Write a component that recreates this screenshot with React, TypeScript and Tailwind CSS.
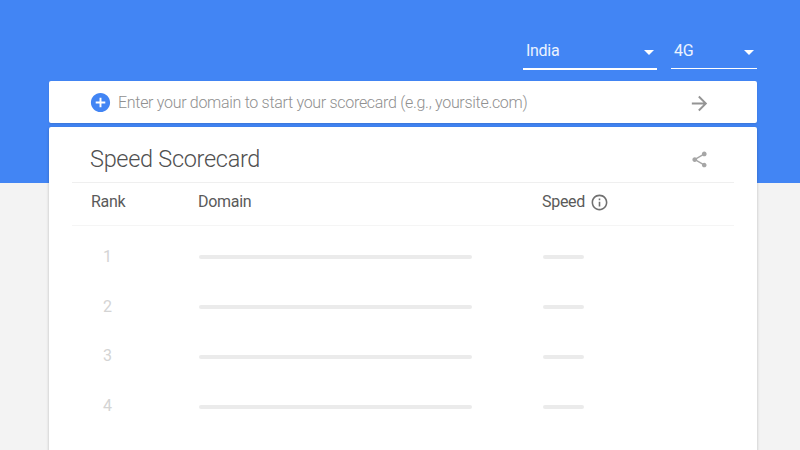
import {
  MdAddCircle,
  MdArrowDropDown,
  MdArrowForward,
  MdInfoOutline,
  MdShare,
} from "react-icons/md";
import clsx from "clsx";

const ranks = [1, 2, 3, 4];

interface SelectProps {
  value: string;
  className: string;
}

function Select({ value, className }: SelectProps) {
  return (
    <button
      className={clsx(
        "flex items-center justify-between border-white pl-[3px] text-left text-white/90",
        className
      )}
    >
      <span className="pt-[2px]">{value}</span>
      <MdArrowDropDown className="mt-[3px] -mr-1 size-6 text-white" />
    </button>
  );
}

export default function App() {
  return (
    <div className="h-[450px] w-[800px] overflow-hidden bg-[linear-gradient(#4285f4_183px,#f3f3f3_183px)] pr-[43px] pl-[49px] font-['Roboto',sans-serif] text-base tracking-[-0.3px]">
      {/* Filters */}
      <div className="flex h-[81px] items-start justify-end gap-[14px] pt-[36px]">
        <Select value="India" className="h-[34px] w-[134px] border-b-2 pb-1" />
        <Select value="4G" className="h-[33px] w-[86px] border-b pb-1" />
      </div>

      {/* Domain input */}
      <div className="flex h-[42px] items-center rounded-xs bg-white pr-[46px] pl-[40px] shadow-[0_1px_2px_rgba(0,0,0,0.12)]">
        <MdAddCircle className="size-[23px] text-[#4285f4]" />
        <input
          className="ml-[6px] flex-1 pt-[2px] font-light text-[#757575] outline-none placeholder:text-[#909090]"
          placeholder="Enter your domain to start your scorecard (e.g., yoursite.com)"
        />
        <MdArrowForward className="mt-[2px] size-[23px] text-[#949494]" />
      </div>

      {/* Scorecard */}
      <div className="mt-1 h-[340px] rounded-xs bg-white px-[23px] shadow-[0_1px_3px_rgba(0,0,0,0.25)]">
        <div className="flex h-[56px] items-center justify-between border-b border-[#efefef] pr-[25px] pb-[1px] pl-[18px]">
          <h1 className="pt-[12px] text-[23.5px] font-light text-[#505050]">Speed Scorecard</h1>
          <MdShare className="mt-[11px] size-[19px] text-[#a6a6a6]" />
        </div>
        <div className="grid h-[43px] grid-cols-[107px_344px_1fr] items-center border-b border-[#f5f5f5] pb-[4px] pl-[19px] text-[#5a5a5a]">
          <span>Rank</span>
          <span>Domain</span>
          <span className="flex items-center gap-[5px]">
            Speed
            <MdInfoOutline className="size-[19px] text-[#707070]" />
          </span>
        </div>
        <div className="pt-[6px]">
          {ranks.map((rank) => (
            <div
              key={rank}
              className="grid h-[49.8px] grid-cols-[108px_344px_1fr] items-center pl-[19px]"
            >
              <span className="pl-[12px] text-[#d4d4d4]">{rank}</span>
              <span className="mt-[1px] h-1 w-[273px] rounded-xs bg-[#ebebeb]" />
              <span className="mt-[1px] h-1 w-[41px] rounded-xs bg-[#ebebeb]" />
            </div>
          ))}
        </div>
      </div>
    </div>
  );
}
